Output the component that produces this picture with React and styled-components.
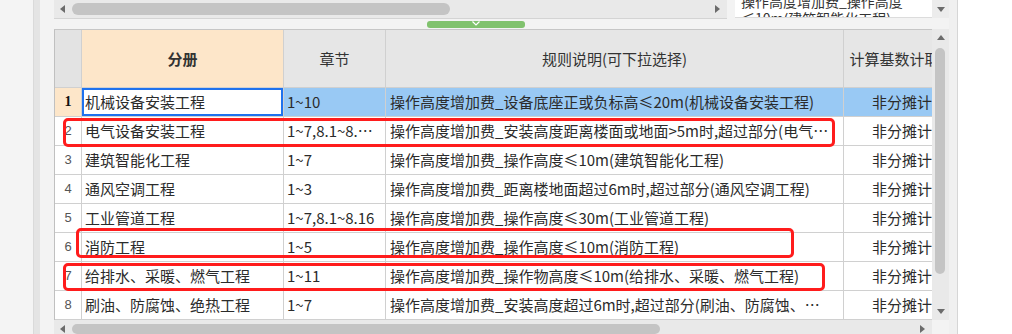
import React from "react";
import styled, { createGlobalStyle } from "styled-components";

const GlobalStyle = createGlobalStyle`
  html, body {
    margin: 0;
    padding: 0;
    background: #f3f3f3;
  }
  body {
    font-family: "Noto Sans CJK SC", "Noto Sans", sans-serif;
  }
`;

//------DATA------\\
const COLUMNS = "27px 202px 102px 458px 132px";

const rows = [
  { name: "机械设备安装工程", chap: "1~10", rule: "操作高度增加费_设备底座正或负标高≤20m(机械设备安装工程)" },
  { name: "电气设备安装工程", chap: "1~7,8.1~8.13,9.1~9.6", rule: "操作高度增加费_安装高度距离楼面或地面>5m时,超过部分(电气设备安装工程)" },
  { name: "建筑智能化工程", chap: "1~7", rule: "操作高度增加费_操作高度≤10m(建筑智能化工程)" },
  { name: "通风空调工程", chap: "1~3", rule: "操作高度增加费_距离楼地面超过6m时,超过部分(通风空调工程)" },
  { name: "工业管道工程", chap: "1~7,8.1~8.16", rule: "操作高度增加费_操作高度≤30m(工业管道工程)" },
  { name: "消防工程", chap: "1~5", rule: "操作高度增加费_操作高度≤10m(消防工程)" },
  { name: "给排水、采暖、燃气工程", chap: "1~11", rule: "操作高度增加费_操作物高度≤10m(给排水、采暖、燃气工程)" },
  { name: "刷油、防腐蚀、绝热工程", chap: "1~7", rule: "操作高度增加费_安装高度超过6m时,超过部分(刷油、防腐蚀、绝热工程)" },
];

//annotation boxes drawn over the grid (page coords)
const marks = [
  { x: 63, y: 118, w: 772, h: 29 },
  { x: 76, y: 228, w: 718, h: 30 },
  { x: 63, y: 263, w: 762, h: 28 },
];

//------PAGE FRAME------\\
const Page = styled.div`
  position: relative;
  display: flex;
  width: 1012px;
  height: 334px;
  overflow: hidden;
  background: #f3f3f3;
`;

const Gutter = styled.div`
  flex: none;
  width: 33px;
  background: #f4f4f4;
`;

const Band = styled.div`
  flex: none;
  width: 7px;
  box-sizing: border-box;
  background: #e4e4e4;
  border-left: 1px solid #dadada;
`;

const Spacer = styled.div`
  flex: none;
  width: 14px;
  background: #f3f3f3;
`;

const Panel = styled.div`
  flex: none;
  width: 895px;
  display: flex;
  flex-direction: column;
`;

const RightPad = styled.div`
  flex: none;
  width: 8px;
  background: #f0f0f0;
  border-right: 1px solid #d6d6d6;
`;

const WhiteArea = styled.div`
  flex: 1;
  background: #ffffff;
`;

//------TOP STRIP------\\
const TopBar = styled.div`
  display: flex;
  gap: 8px;
  height: 19px;
  flex: none;
`;

const Combo = styled.div`
  flex: 1;
  display: flex;
  height: 18px;
  background: #ececec;
`;

const ComboText = styled.div`
  width: 191px;
  padding-left: 6px;
  background: #ffffff;
  border-bottom: 1px solid #dcdcdc;
  overflow: hidden;
  font-size: 14px;
  line-height: 17px;
  color: #333;
`;

const ComboLines = styled.div`
  margin-top: -7px;
  width: 180px;
`;

const ComboArrow = styled.div`
  flex: 1;
  display: flex;
  align-items: center;
  justify-content: center;
`;

//------SCROLLBARS------\\
const HScroll = styled.div`
  flex: none;
  width: ${({ $width }) => $width}px;
  height: ${({ $height = 17 }) => $height}px;
  box-sizing: border-box;
  display: flex;
  align-items: center;
  background: #e9e9e9;
  border-bottom: ${({ $line }) => ($line ? "1px solid #d4d4d4" : "none")};
`;

const ArrowBtn = styled.div`
  flex: none;
  width: ${({ $size = 16 }) => $size}px;
  height: ${({ $size = 16 }) => $size}px;
  display: flex;
  align-items: center;
  justify-content: center;
`;

const HTrack = styled.div`
  flex: 1;
  padding-left: 2px;
`;

const HThumb = styled.div`
  width: ${({ $len }) => $len}px;
  height: ${({ $thick = 11 }) => $thick}px;
  border-radius: 6px;
  background: #c4c4c4;
`;

const VScroll = styled.div`
  flex: none;
  width: 17px;
  display: flex;
  flex-direction: column;
  background: #e9e9e9;
`;

const VTrack = styled.div`
  flex: 1;
  padding: 2px 0 0 3px;
`;

const VThumb = styled.div`
  width: 10px;
  height: ${({ $len }) => $len}px;
  border-radius: 5px;
  background: #c4c4c4;
`;

const Arrow = ({ dir }) => {
  const pts = {
    left: "5,0 5,8 0,4",
    right: "0,0 0,8 5,4",
    up: "0,5 8,5 4,0",
    down: "0,0 8,0 4,5",
  }[dir];
  const horiz = dir === "left" || dir === "right";
  return (
    <svg width={horiz ? 5 : 8} height={horiz ? 8 : 5} viewBox={horiz ? "0 0 5 8" : "0 0 8 5"}>
      <polygon points={pts} fill="#6b6b6b" />
    </svg>
  );
};

//------SPLITTER------\\
const Splitter = styled.div`
  flex: none;
  height: 10px;
  display: flex;
  align-items: center;
  padding-left: 373px;
`;

const Handle = styled.div`
  width: 98px;
  height: 7px;
  border-radius: 3px;
  background: #80c26d;
  display: flex;
  justify-content: center;
  align-items: flex-start;
`;

//------GRID------\\
const GridArea = styled.div`
  flex: none;
  display: flex;
  height: 291px;
`;

const Viewport = styled.div`
  flex: none;
  width: 878px;
  overflow: hidden;
  box-sizing: border-box;
  border-top: 1px solid #c6c6c6;
  border-left: 1px solid #c0c0c0;
  background: #ffffff;
`;

const Grid = styled.div`
  display: grid;
  grid-template-columns: ${COLUMNS};
  grid-template-rows: 58px;
  grid-auto-rows: 29px;
  width: max-content;
`;

const Cell = styled.div`
  box-sizing: border-box;
  min-width: 0;
  padding: 0 ${({ $padR = 3 }) => $padR}px 0 ${({ $pad = 3 }) => $pad}px;
  border-right: 1px solid #d0d0d0;
  border-bottom: 1px solid #d0d0d0;
  background: ${({ $bg = "#ffffff" }) => $bg};
  box-shadow: ${({ $focus }) => ($focus ? "inset 0 0 0 2px #1f72ee" : "none")};
  font-size: 15px;
  line-height: 28px;
  color: #2b2b2b;
  text-align: ${({ $align = "left" }) => $align};
  white-space: nowrap;
  overflow: hidden;
  text-overflow: ellipsis;
`;

const HeadCell = styled(Cell)`
  line-height: 57px;
  text-align: center;
  color: #333;
  font-weight: ${({ $bold }) => ($bold ? 700 : 400)};
  background: ${({ $bg = "#e6e6e6" }) => $bg};
  text-overflow: clip;
`;

const NumCell = styled(Cell)`
  padding: 0;
  text-align: center;
  font-family: ${({ $active }) =>
    $active ? '"Liberation Serif", serif' : '"Liberation Sans", sans-serif'};
  font-weight: ${({ $active }) => ($active ? 700 : 400)};
  font-size: ${({ $active }) => ($active ? 14 : 13)}px;
  color: ${({ $active }) => ($active ? "#111" : "#555")};
`;

const Mark = styled.div`
  position: absolute;
  left: ${({ $x }) => $x}px;
  top: ${({ $y }) => $y}px;
  width: ${({ $w }) => $w}px;
  height: ${({ $h }) => $h}px;
  box-sizing: border-box;
  border: 3px solid #ff1c1c;
  border-radius: 5px;
  pointer-events: none;
`;

const PEACH = "#fde6c9";
const SELECTED = "#99c9f4";

export default function App() {
  return (
    <>
      <GlobalStyle />
      <Page>
        <Gutter />
        <Band />
        <Spacer />
        <Panel>
          <TopBar>
            <HScroll $width={673} $height={19} $line>
              <ArrowBtn>
                <Arrow dir="left" />
              </ArrowBtn>
              <HTrack>
                <HThumb $len={378} $thick={12} />
              </HTrack>
              <ArrowBtn $size={20}>
                <Arrow dir="right" />
              </ArrowBtn>
            </HScroll>
            <Combo>
              <ComboText>
                <ComboLines>操作高度增加费_操作高度≤10m(建筑智能化工程)</ComboLines>
              </ComboText>
              <ComboArrow>
                <Arrow dir="down" />
              </ComboArrow>
            </Combo>
          </TopBar>

          <Splitter>
            <Handle>
              <svg width="8" height="5" viewBox="0 0 8 5">
                <polyline points="0.5,0.5 4,4 7.5,0.5" fill="none" stroke="#ffffff" strokeWidth="1.2" />
              </svg>
            </Handle>
          </Splitter>

          <GridArea>
            <Viewport>
              <Grid>
                <HeadCell $bg="#e3e3e3" />
                <HeadCell $bg={PEACH} $bold>
                  分册
                </HeadCell>
                <HeadCell>章节</HeadCell>
                <HeadCell>规则说明(可下拉选择)</HeadCell>
                <HeadCell>计算基数计取方式</HeadCell>

                {rows.map((row, i) => {
                  const active = i === 0;
                  const bg = active ? SELECTED : "#ffffff";
                  return (
                    <React.Fragment key={row.name}>
                      <NumCell $active={active} $bg={active ? PEACH : "#ffffff"}>
                        {i + 1}
                      </NumCell>
                      <Cell $focus={active}>{row.name}</Cell>
                      <Cell $bg={bg} $padR={8}>
                        {row.chap}
                      </Cell>
                      <Cell $bg={bg} $pad={4} $padR={14}>
                        {row.rule}
                      </Cell>
                      <Cell $bg={bg} $align="center">
                        非分摊计取
                      </Cell>
                    </React.Fragment>
                  );
                })}
              </Grid>
            </Viewport>
            <VScroll>
              <ArrowBtn $size={17}>
                <Arrow dir="up" />
              </ArrowBtn>
              <VTrack>
                <VThumb $len={226} />
              </VTrack>
              <ArrowBtn $size={17}>
                <Arrow dir="down" />
              </ArrowBtn>
            </VScroll>
          </GridArea>

          <TopBar>
            <HScroll $width={878}>
              <ArrowBtn>
                <Arrow dir="left" />
              </ArrowBtn>
              <HTrack>
                <HThumb $len={588} $thick={10} />
              </HTrack>
              <ArrowBtn $size={20}>
                <Arrow dir="right" />
              </ArrowBtn>
            </HScroll>
          </TopBar>
        </Panel>
        <RightPad />
        <WhiteArea />

        {marks.map((m) => (
          <Mark key={m.y} $x={m.x} $y={m.y} $w={m.w} $h={m.h} />
        ))}
      </Page>
    </>
  );
}
